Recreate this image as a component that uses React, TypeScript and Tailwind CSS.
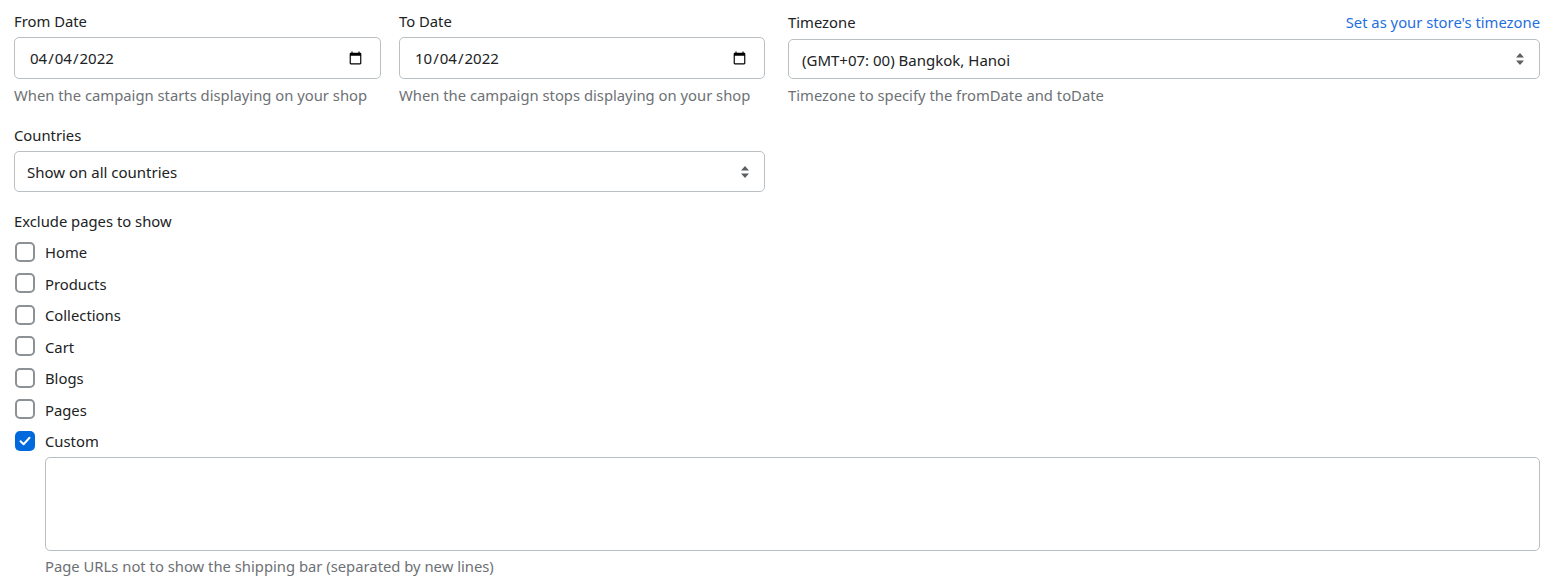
import React from "react";

const pages = ["Home", "Products", "Collections", "Cart", "Blogs", "Pages"];

const SelectArrows = () => (
  <svg className="pointer-events-none absolute right-[15px] top-1/2 -translate-y-1/2" width="10" height="14" viewBox="0 0 10 14">
    <path d="M5 1 L9 5.6 H1 Z M5 13 L1 8.4 H9 Z" fill="#5c5f62" />
  </svg>
);

const DateField = ({ label, value, help }: { label: string; value: string; help: string }) => (
  <div className="flex flex-col">
    <label className="h-[37px] pt-[10px] leading-[22px]">{label}</label>
    <input
      type="date"
      defaultValue={value}
      className="h-[42px] w-full rounded-[5px] border border-[#babfc3] bg-white pl-[14px] pr-[15px] text-[15px] text-[#202223] outline-none"
    />
    <p className="mt-[5px] whitespace-nowrap leading-[22px] text-[#6d7175]">{help}</p>
  </div>
);

const Check = ({ label, checked }: { label: string; checked?: boolean }) => (
  <label className="flex h-[31.5px] items-center gap-[10px] pl-[15px]">
    {checked ? (
      <span className="flex h-[20px] w-[20px] items-center justify-center rounded-[5px] bg-[#0069dc]">
        <svg width="12" height="10" viewBox="0 0 12 10" fill="none">
          <path d="M1.5 5.2 L4.6 8.2 L10.5 1.8" stroke="white" strokeWidth="2" strokeLinecap="round" strokeLinejoin="round" />
        </svg>
      </span>
    ) : (
      <span className="h-[20px] w-[20px] rounded-[5px] border-2 border-[#8c9196] bg-white" />
    )}
    <span className="pt-[1px]">{label}</span>
  </label>
);

export default function App() {
  return (
    <div className="h-[581px] overflow-hidden bg-white pl-[14px] pr-[19px] text-[14.8px] text-[#202223] [font-family:'Noto_Sans',sans-serif]">
      <div className="grid grid-cols-[751px_752px] gap-x-[23px]">
        <div className="grid grid-cols-[367px_366px] gap-x-[18px]">
          <DateField label="From Date" value="2022-04-04" help="When the campaign starts displaying on your shop" />
          <DateField label="To Date" value="2022-10-04" help="When the campaign stops displaying on your shop" />
        </div>
        <div className="flex flex-col">
          <div className="flex h-[39px] justify-between pt-[11px] leading-[22px]">
            <span>Timezone</span>
            <a className="text-[#1f6fe0]">Set as your store's timezone</a>
          </div>
          <div className="relative h-[40px]">
            <select className="h-full w-full appearance-none rounded-[5px] border border-[#babfc3] bg-white px-[13px] pt-[3px] text-[15px] outline-none">
              <option>(GMT+07: 00) Bangkok, Hanoi</option>
            </select>
            <SelectArrows />
          </div>
          <p className="mt-[5px] leading-[22px] text-[#6d7175]">Timezone to specify the fromDate and toDate</p>
        </div>
      </div>

      <div className="mt-[18px] w-[751px]">
        <label className="block h-[27px] leading-[22px]">Countries</label>
        <div className="relative h-[41px]">
          <select className="h-full w-full appearance-none rounded-[5px] border border-[#babfc3] bg-white px-[12px] pt-[2px] text-[15px] outline-none">
            <option>Show on all countries</option>
          </select>
          <SelectArrows />
        </div>
      </div>

      <p className="mt-[18px] leading-[22px]">Exclude pages to show</p>
      <div className="mt-[4px] flex flex-col -ml-[14px]">
        {pages.map((p) => (
          <Check key={p} label={p} />
        ))}
        <Check label="Custom" checked />
      </div>
      <div className="ml-[31px]">
        <textarea className="block h-[94px] w-full resize-none rounded-[5px] border border-[#babfc3] bg-white outline-none" />
        <p className="mt-[4px] leading-[22px] text-[#6d7175]">Page URLs not to show the shipping bar (separated by new lines)</p>
      </div>
    </div>
  );
}
